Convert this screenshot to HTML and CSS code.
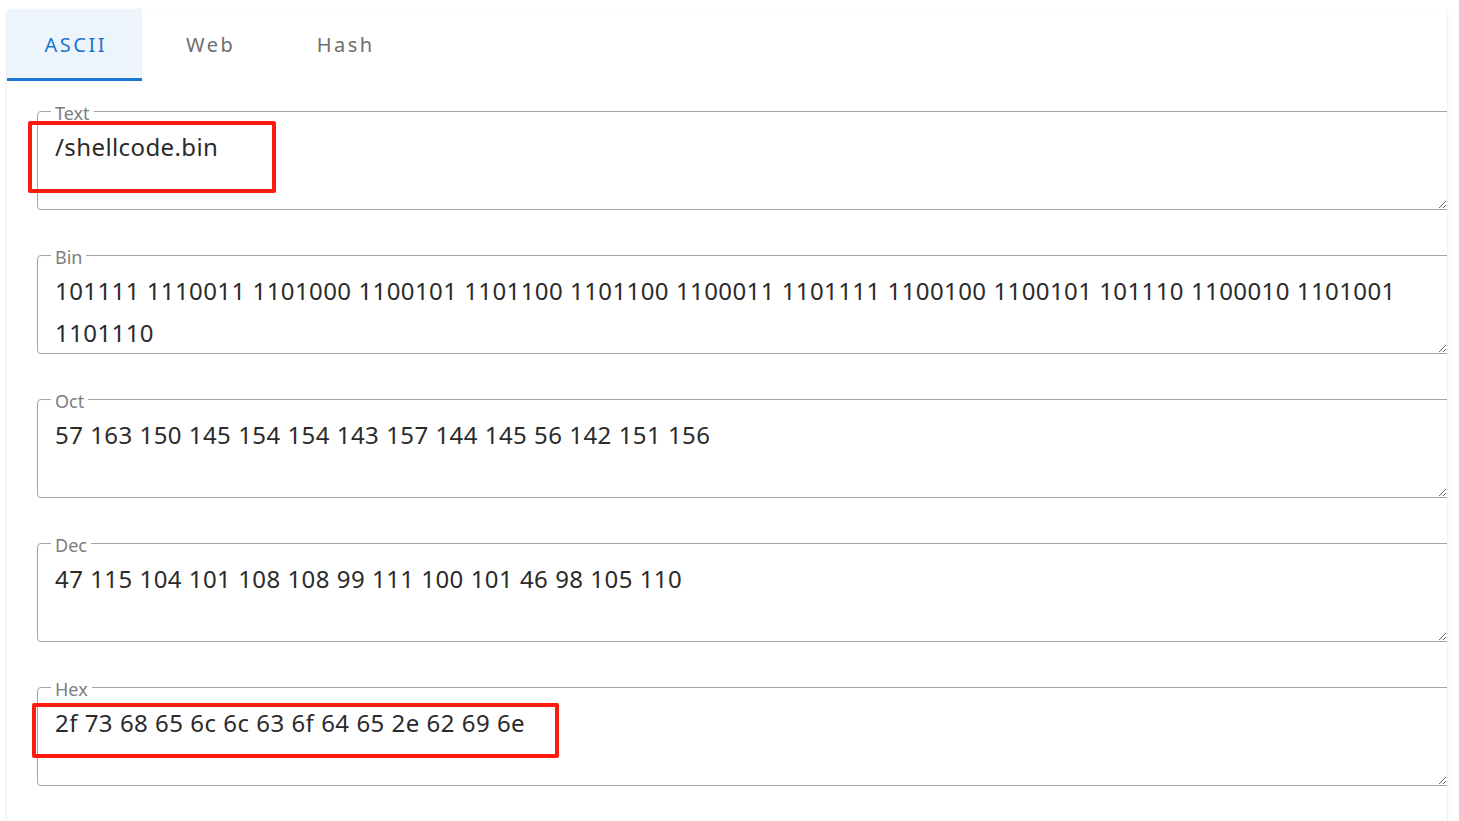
FILE: index.html
```html
<!DOCTYPE html>
<html lang="en">
<head>
<meta charset="utf-8">
<title>ASCII converter</title>
<link rel="stylesheet" href="styles.css">
</head>
<body>
<div class="page">
  <div class="card">
    <div class="tabs">
      <div class="tab active">ASCII</div>
      <div class="tab">Web</div>
      <div class="tab">Hash</div>
    </div>
    <div class="panel">
      <fieldset class="field">
        <legend>Text</legend>
        <textarea spellcheck="false">/shellcode.bin</textarea>
      </fieldset>
      <fieldset class="field">
        <legend>Bin</legend>
        <textarea spellcheck="false">101111 1110011 1101000 1100101 1101100 1101100 1100011 1101111 1100100 1100101 101110 1100010 1101001 1101110</textarea>
      </fieldset>
      <fieldset class="field">
        <legend>Oct</legend>
        <textarea spellcheck="false">57 163 150 145 154 154 143 157 144 145 56 142 151 156</textarea>
      </fieldset>
      <fieldset class="field">
        <legend>Dec</legend>
        <textarea spellcheck="false">47 115 104 101 108 108 99 111 100 101 46 98 105 110</textarea>
      </fieldset>
      <fieldset class="field">
        <legend>Hex</legend>
        <textarea spellcheck="false">2f 73 68 65 6c 6c 63 6f 64 65 2e 62 69 6e</textarea>
      </fieldset>
    </div>
  </div>
  <div class="mark mark-text"></div>
  <div class="mark mark-hex"></div>
</div>
</body>
</html>
```

FILE: styles.css
```css
html, body {
  margin: 0;
  padding: 0;
  background: #ffffff;
  overflow: hidden;
}

.page {
  position: relative;
  width: 1459px;
  height: 821px;
  padding: 9px 0 0 7px;
  box-sizing: border-box;
  font-family: "Noto Sans", "Open Sans", sans-serif;
}

.card {
  width: 1440px;
  height: 840px;
  background: #ffffff;
  border-radius: 4px;
  overflow: hidden;
  box-shadow: 0 2px 1px -1px rgba(0,0,0,0.2), 0 1px 1px 0 rgba(0,0,0,0.14), 0 1px 3px 0 rgba(0,0,0,0.12);
}

.tabs {
  display: flex;
  height: 72px;
}

.tab {
  width: 135px;
  height: 72px;
  box-sizing: border-box;
  display: flex;
  align-items: center;
  justify-content: center;
  padding-bottom: 2px;
  font-size: 20px;
  letter-spacing: 2.5px;
  text-indent: 2.5px;
  color: #6e6e6e;
}

.tab.active {
  background: #eef4fc;
  color: #1976d2;
  border-bottom: 3px solid #1976d2;
  padding-top: 2px;
  padding-bottom: 0;
}

.panel {
  display: flex;
  flex-direction: column;
  gap: 35px;
  padding: 20px 0 0 30px;
}

.field {
  margin: 0;
  width: 1430px;
  box-sizing: border-box;
  padding: 0 0 0 17px;
  border: 1px solid #a3a3a3;
  border-radius: 4px;
}

.field legend {
  margin-left: -4px;
  padding: 0 4px;
  height: 20px;
  font-size: 18px;
  line-height: 24px;
  color: #7d7d7d;
}

.field textarea {
  display: block;
  margin: 5px 0 0 0;
  width: 1392px;
  height: 83px;
  padding: 0;
  border: none;
  outline: none;
  background: transparent;
  font-family: "Noto Sans", "Open Sans", sans-serif;
  font-size: 24px;
  line-height: 42px;
  letter-spacing: 0.4px;
  word-spacing: 0.3px;
  color: #2b2b2b;
  resize: vertical;
  overflow: hidden;
}

.mark {
  position: absolute;
  border: 4px solid #ff1a0f;
  border-radius: 2px;
  box-sizing: border-box;
}

.mark-text {
  left: 28px;
  top: 121px;
  width: 248px;
  height: 72px;
}

.mark-hex {
  left: 32px;
  top: 703px;
  width: 527px;
  height: 55px;
}
```
